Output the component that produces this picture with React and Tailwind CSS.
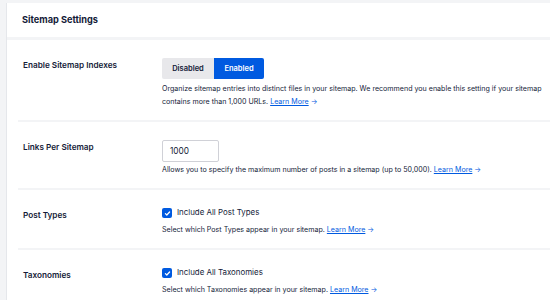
import React from 'react'

const font = { fontFamily: 'Inter, "Noto Sans", sans-serif' }

function LearnMore() {
    return (
        <>
            {' '}
            <a href="#" className="text-[#005ae0] underline underline-offset-1">Learn More</a>
            <span className="text-[#005ae0]"> →</span>
        </>
    )
}

function Row({ label, children, last }) {
    return (
        <div className={`flex pl-[5px] pt-[18px] pb-[12px] ${last ? '' : 'border-b-2 border-[#f3f4f6]'}`}>
            <div className="w-[139px] shrink-0 text-[8.2px] font-semibold text-[#141b38] leading-[12px] pt-[1px]">{label}</div>
            <div className="flex-1">{children}</div>
        </div>
    )
}

function Desc({ children }) {
    return <p className="text-[7.1px] leading-[13px] text-[#141b38]">{children}</p>
}

function Check({ label }) {
    return (
        <label className="flex items-center gap-[5px] h-[10px] mb-[5px]">
            <span className="w-[10px] h-[10px] rounded-[2px] bg-[#005ae0] flex items-center justify-center">
                <svg width="7" height="7" viewBox="0 0 10 10" fill="none">
                    <path d="M2 5.2l2 2 4-4.4" stroke="white" strokeWidth="1.8" strokeLinecap="round" strokeLinejoin="round" />
                </svg>
            </span>
            <span className="text-[7.9px] text-[#141b38]">{label}</span>
        </label>
    )
}

export default function App() {
    return (
        <div className="w-[550px] h-[300px] overflow-hidden bg-[#f3f4f6] pt-[3px] pl-[6px]" style={font}>
            <div className="w-[560px] h-[320px] bg-white border-l border-[#e5e7eb]">
                {/* header */}
                <div className="h-[37px] flex items-center pl-[15px] border-b-[3px] border-[#f3f4f6]">
                    <h2 className="text-[9.2px] font-bold text-[#141b38]">Sitemap Settings</h2>
                </div>
                <div className="pl-[11px]">
                    <Row label="Enable Sitemap Indexes">
                        <div className="flex h-[21px] mb-[3px]">
                            <button className="w-[52px] bg-[#e8e8eb] rounded-l-[2px] text-[7.5px] font-semibold text-[#141b38]">Disabled</button>
                            <button className="w-[50px] bg-[#005ae0] rounded-r-[2px] text-[7.5px] font-semibold text-white">Enabled</button>
                        </div>
                        <Desc>
                            Organize sitemap entries into distinct files in your sitemap. We recommend you enable this setting if your sitemap contains more than 1,000 URLs.
                            <LearnMore />
                        </Desc>
                    </Row>
                    <Row label="Links Per Sitemap">
                        <div className="w-[57px] h-[22px] border border-[#d0d1d7] rounded-[2px] flex items-center pl-[7px] text-[8.3px] text-[#141b38] mb-[1px]">1000</div>
                        <Desc>
                            Allows you to specify the maximum number of posts in a sitemap (up to 50,000).
                            <LearnMore />
                        </Desc>
                    </Row>
                    <Row label="Post Types">
                        <Check label="Include All Post Types" />
                        <Desc>
                            Select which Post Types appear in your sitemap.
                            <LearnMore />
                        </Desc>
                    </Row>
                    <Row label="Taxonomies" last>
                        <Check label="Include All Taxonomies" />
                        <Desc>
                            Select which Taxonomies appear in your sitemap.
                            <LearnMore />
                        </Desc>
                    </Row>
                </div>
            </div>
        </div>
    )
}
